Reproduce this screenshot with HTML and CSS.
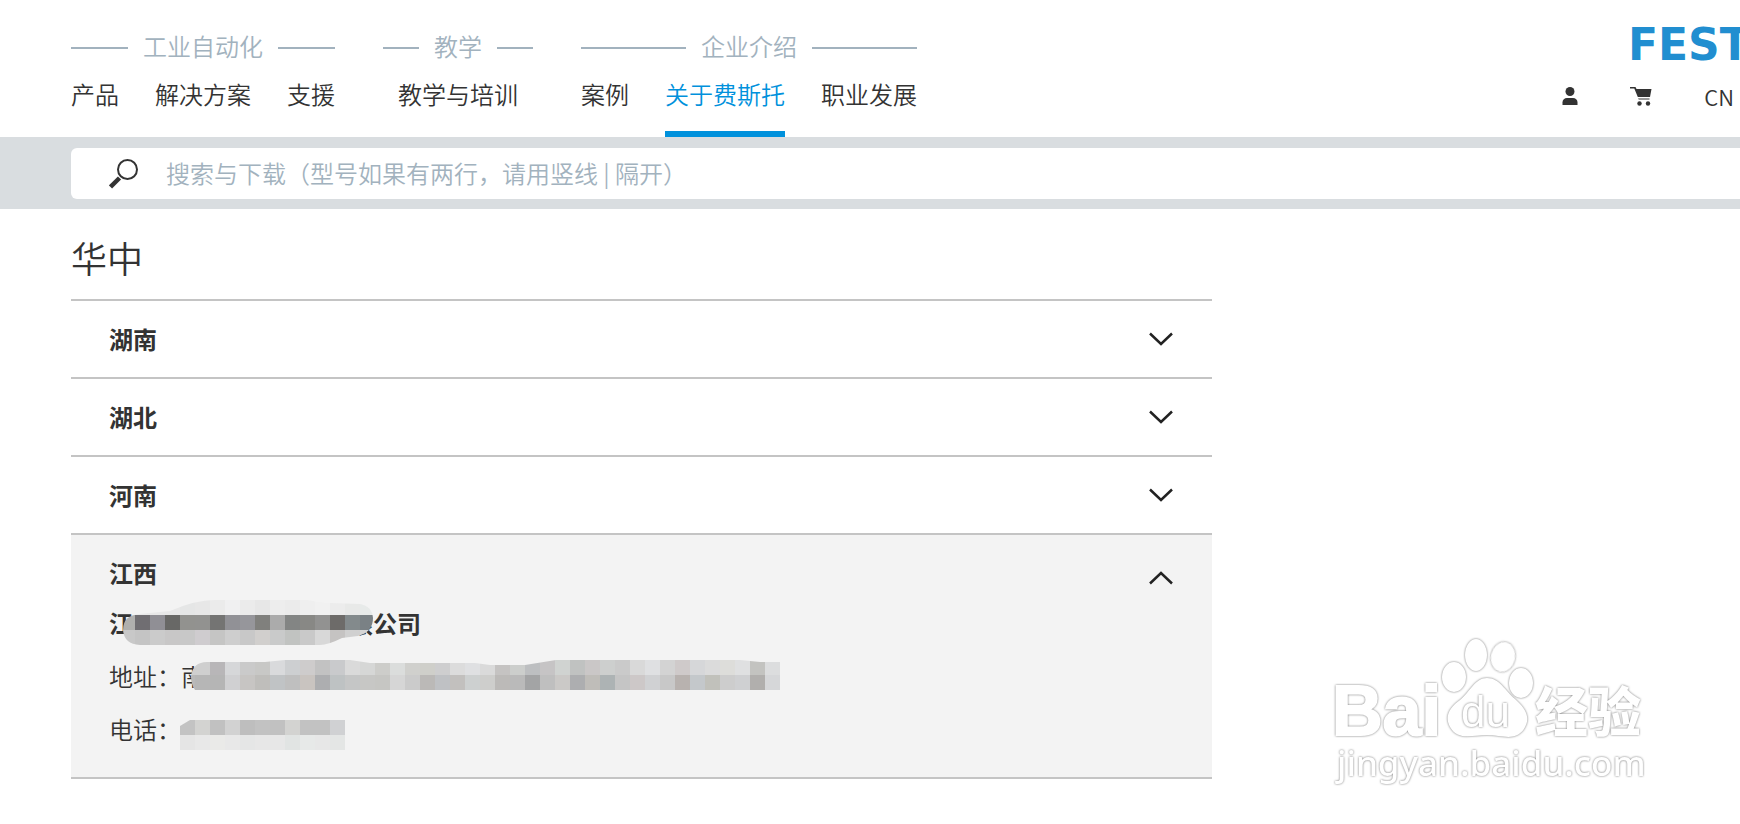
FILE: index.html
```html
<!DOCTYPE html>
<html lang="zh-CN">
<head>
  <meta charset="UTF-8" />
  <title>华中 | Festo</title>
  <meta name="viewport" content="width=device-width, initial-scale=1.0" />
  <link rel="stylesheet" href="styles.css">
</head>
<body>
  <header class="header">
    <nav class="nav">
      <div class="nav-group">
        <div class="nav-title">工业自动化</div>
        <div class="nav-links">
          <a href="#">产品</a>
          <a href="#">解决方案</a>
          <a href="#">支援</a>
        </div>
      </div>
      <div class="nav-group">
        <div class="nav-title">教学</div>
        <div class="nav-links">
          <a href="#">教学与培训</a>
        </div>
      </div>
      <div class="nav-group">
        <div class="nav-title">企业介绍</div>
        <div class="nav-links">
          <a href="#">案例</a>
          <a href="#" class="active">关于费斯托</a>
          <a href="#">职业发展</a>
        </div>
      </div>
    </nav>

    <div class="header-right">
      <a href="#" class="logo">FESTO</a>
      <div class="tools">
        <button type="button" class="tool" aria-label="登录">
          <svg width="16" height="18" viewBox="0 0 16 18" fill="currentColor">
            <circle cx="8" cy="4.5" r="4.5" />
            <path d="M0.5 18v-2.5c0-3 2-4.5 4.5-4.5h6c2.5 0 4.5 1.5 4.5 4.5V18z" />
          </svg>
        </button>
        <button type="button" class="tool" aria-label="购物车">
          <svg width="22" height="19" viewBox="0 0 22 19" fill="currentColor">
            <path d="M0 0h5.500l1 2H21.500l-1.500 8H7.800L4.300 1.500H0z" />
            <path d="M8 11h11.500v2H8.800z" opacity="0.5" />
            <circle cx="9.500" cy="16.500" r="2.200" />
            <circle cx="18" cy="16.500" r="2.200" />
          </svg>
        </button>
        <button type="button" class="tool">CN</button>
      </div>
    </div>
  </header>

  <form class="search" role="search">
    <div class="search-box">
      <svg width="30" height="30" viewBox="0 0 30 30" fill="none" stroke="currentColor">
        <circle cx="18.500" cy="10.500" r="9.500" stroke-width="2" />
        <path d="M10.500 19L1.500 28" stroke-width="4.500" />
      </svg>
      <input type="search" aria-label="搜索与下载" placeholder="搜索与下载（型号如果有两行，请用竖线 | 隔开）" />
    </div>
  </form>

  <main class="content">
    <section class="region">
      <h1>华中</h1>
      <div class="accordion">
        <div class="item">
          <button type="button" class="item-head" aria-expanded="false">湖南
            <svg class="chevron" width="24" height="14" viewBox="0 0 24 14"><path d="M1 1.500l11 10.500 11-10.500" /></svg>
          </button>
        </div>
        <div class="item">
          <button type="button" class="item-head" aria-expanded="false">湖北
            <svg class="chevron" width="24" height="14" viewBox="0 0 24 14"><path d="M1 1.500l11 10.500 11-10.500" /></svg>
          </button>
        </div>
        <div class="item">
          <button type="button" class="item-head" aria-expanded="false">河南
            <svg class="chevron" width="24" height="14" viewBox="0 0 24 14"><path d="M1 1.500l11 10.500 11-10.500" /></svg>
          </button>
        </div>
        <div class="item open">
          <button type="button" class="item-head" aria-expanded="true">江西
            <svg class="chevron" width="24" height="14" viewBox="0 0 24 14"><path d="M1 12.500l11-10.500 11 10.500" /></svg>
          </button>
          <div class="item-body">
            <p class="company">江<span class="mask mask-company"><svg id="maskCompany" width="255" height="45"></svg></span>限公司</p>
            <p>地址：南<span class="mask mask-address"><svg id="maskAddress" width="600" height="30"></svg></span></p>
            <p>电话：<span class="mask mask-phone"><svg id="maskPhone" width="165" height="30"></svg></span></p>
          </div>
        </div>
      </div>
    </section>
  </main>

  <svg class="watermark" width="330" height="160" viewBox="0 0 330 160">
    <text x="4" y="105" class="wm-bai">Bai</text>
    <ellipse cx="126" cy="47" rx="12" ry="15" />
    <ellipse cx="148" cy="25" rx="11" ry="16" />
    <ellipse cx="175" cy="27" rx="12" ry="15" transform="rotate(12 175 27)" />
    <ellipse cx="193" cy="53" rx="12" ry="15" />
    <path d="M159 48c-12 0-17 14-27 22-10 7-16 16-10 27 8 14 22 8 37 8s28 7 37-6c8-12 0-22-9-30-10-8-15-21-28-21z" />
    <text x="133" y="97" class="wm-du">du</text>
    <text x="207" y="102" class="wm-cn">经验</text>
    <text x="9" y="146" class="wm-url">jingyan.baidu.com</text>
  </svg>

  <script>
    // pixelated cover over private details, one row of colors per line of cells
    const masks = {
      maskCompany: {
        clip: "M3 30Q3 15 20 14L50 11Q75 0 95 0H188Q195 2 210 3L240 4Q252 6 253 18Q253 32 238 36L222 38Q208 45 200 45H20Q4 44 3 30z",
        rows: [
          "e8e8e8 e8e8e8 e8e8e8 e8e8e8 e5e6e6 e7e7e7 ebebeb f0f0f1 ebebeb e7e7e7 ededed ebebeb efefef f1f1f1 ececec e8e9e8 e7eae9",
          "b0b0ae 706e72 908f95 686866 92928f 929290 747473 919196 96969b 80807d ababab 838584 888885 929291 6d6b69 838a8c 7a8185",
          "c8c8c8 c4c4c4 cbcbcb c8c7c7 c8c8c8 cfcccf c5c5c4 cecece c8c8c8 d1cfcd c9caca c1c3c1 c9c9c9 d8d8d8 c5c3c2 d0d0d0 d5d5d5"
        ]
      },
      maskAddress: {
        clip: "M11 16Q13 2 27 2H85L105 0H170L190 3H295L310 5H345L376 0H560L580 2H600V30H15Q11 24 11 16z",
        rows: [
          "cfcfcf cfcfcf b8b6b8 d6d7d9 cacaca c8c8c6 d9dadc cdcfd1 cecccc c2c2c2 c9cacc dadada d6d7d6 cdcdca dbdddc d0d0cd cfcfca cececf dcdcdc dfe0e2 dadada c5c3c2 cccecc bdbfc1 c6c4c5 d0d3d1 c0c2c1 cac7c7 cdcfce cacaca d9d9d9 dfe0e2 d3d3d3 cfcaca d6d7d9 dbdbdb ddddda dfe0e1 c3c3c0 dcddde",
          "b9b9b9 b6b6b6 b5b5b5 d0d0d2 c7c5c3 bfbebb c0c3c5 bfbfbf c9c4c0 adaeb0 bec2c3 c5c6c6 c7c7c5 c6c6c3 d6d6d6 cbcbcb bbb9b7 bfc1c4 c2c0be cdd0d0 cececc bcbab8 bababa a3a4a5 bfbfbf cbc9c7 adaeb0 bfbdb9 adb3b4 c5c5c5 cdc8c8 d0d1d3 c8c8c8 b8b2af c4c8cb c1c1bb cdcdcd cfd0d2 b1afad d6d7d9"
        ]
      },
      maskPhone: {
        clip: "M0 6L10 0H165V30H0z",
        rows: [
          "c3c3c3 d3d3d1 c1c1c1 d2d2d2 bebebe c2c2c2 c1c1c1 d3d3d1 c2c2c2 c2c2c2 d0d1d3",
          "e5e5e5 e8e8e8 eaeae8 e8e8e8 e5e6e6 e7e7e7 e7e7e7 e1e4e3 e7e9e8 e7e7e7 e4e6e5"
        ]
      }
    };

    for (const id in masks) {
      const svg = document.getElementById(id);
      let html = `<clipPath id="${id}Clip"><path d="${masks[id].clip}"/></clipPath><g clip-path="url(#${id}Clip)" shape-rendering="crispEdges">`;
      masks[id].rows.forEach((row, y) => {
        row.split(" ").forEach((color, x) => {
          html += `<rect x="${x * 15}" y="${y * 15}" width="15" height="15" fill="#${color}"/>`;
        });
      });
      svg.innerHTML = html + "</g>";
    }
  </script>
</body>
</html>
```
FILE: styles.css
```css
* {
  margin: 0;
  padding: 0;
  box-sizing: border-box;
}

body {
  background: #fff;
  color: #333;
  font-family: "Noto Sans CJK SC", sans-serif;
  font-size: 24px;
  font-weight: 350;
  line-height: 28px;
  overflow-x: hidden;
}

a {
  color: inherit;
  text-decoration: none;
}

button {
  border: none;
  background: none;
  color: inherit;
  font: inherit;
  cursor: pointer;
}

/* header */
.header {
  display: flex;
  justify-content: space-between;
  padding: 30px 0 0 71px;
}

.nav {
  display: flex;
  gap: 48px;
}

.nav-title {
  display: flex;
  align-items: center;
  gap: 15px;
  height: 32px;
  margin-bottom: 18px;
  color: #a2b2be;
}

.nav-title::before,
.nav-title::after {
  content: "";
  flex: 1;
  min-width: 36px;
  height: 2px;
  margin-top: 4px;
  background: #a2b2be;
}

.nav-links {
  display: flex;
  justify-content: center;
  gap: 36px;
}

.nav-links a {
  padding-bottom: 23px;
  border-bottom: 6px solid transparent;
}

.nav-links .active {
  color: #0091dc;
  border-color: #0091dc;
}

.header-right {
  display: flex;
  flex-direction: column;
  align-items: flex-end;
  gap: 22px;
}

.logo {
  width: 112px;
  color: #218ed0;
  font-family: "DejaVu Sans", sans-serif;
  font-size: 44px;
  font-weight: 700;
  line-height: 30px;
}

.tools {
  display: flex;
  align-items: center;
  gap: 52px;
  padding-right: 6px;
}

.tool {
  display: flex;
  font-size: 22px;
}

/* search */
.search {
  padding: 11px 0 10px 71px;
  background: #d9dde0;
}

.search-box {
  display: flex;
  align-items: center;
  gap: 27px;
  height: 51px;
  padding-left: 38px;
  border-radius: 6px 0 0 6px;
  background: #fff;
}

.search-box input {
  flex: 1;
  padding-bottom: 2px;
  border: none;
  outline: none;
  background: none;
  color: inherit;
  font: inherit;
}

.search-box input::placeholder {
  color: #a2b2be;
  opacity: 1;
}

/* region list */
.content {
  display: grid;
  grid-template-columns: 67fr 31fr;
  padding: 26px 0 45px 71px;
}

h1 {
  margin-bottom: 20px;
  font-size: 36px;
  font-weight: 350;
  line-height: 44px;
}

.accordion {
  border-bottom: 2px solid #c4c4c4;
}

.item {
  border-top: 2px solid #c4c4c4;
}

.item-head {
  display: flex;
  align-items: center;
  justify-content: space-between;
  width: 100%;
  height: 76px;
  padding: 0 39px 0 38px;
  font-weight: 700;
}

.chevron {
  fill: none;
  stroke: #222;
  stroke-width: 2.5;
}

.open {
  background: #f3f3f3;
}

.open .chevron {
  margin-top: 10px;
}

.item-body {
  display: flex;
  flex-direction: column;
  gap: 25px;
  margin-top: -2px;
  padding: 0 38px 34px;
}

.company {
  font-weight: 700;
}

.mask {
  display: inline-block;
  position: relative;
  height: 28px;
  vertical-align: top;
}

.mask svg {
  position: absolute;
}

.mask-company {
  width: 216px;
}

.mask-company svg {
  top: -9px;
  left: -13px;
}

.mask-address svg {
  top: -2px;
  left: -25px;
}

.mask-phone svg {
  top: 5px;
  left: -1px;
}

/* watermark */
.watermark {
  position: absolute;
  right: 82px;
  top: 630px;
  fill: #fff;
}

.watermark > * {
  filter: drop-shadow(0 0 1px #777);
}

.wm-bai {
  font: 700 70px "Liberation Sans", sans-serif;
  stroke: #fff;
  stroke-width: 2;
}

.wm-du {
  font: 400 44px "Liberation Sans", sans-serif;
}

.wm-cn {
  font: 900 53px "Noto Sans CJK SC", sans-serif;
}

.wm-url {
  font: 500 35px "Noto Sans", sans-serif;
}
```
